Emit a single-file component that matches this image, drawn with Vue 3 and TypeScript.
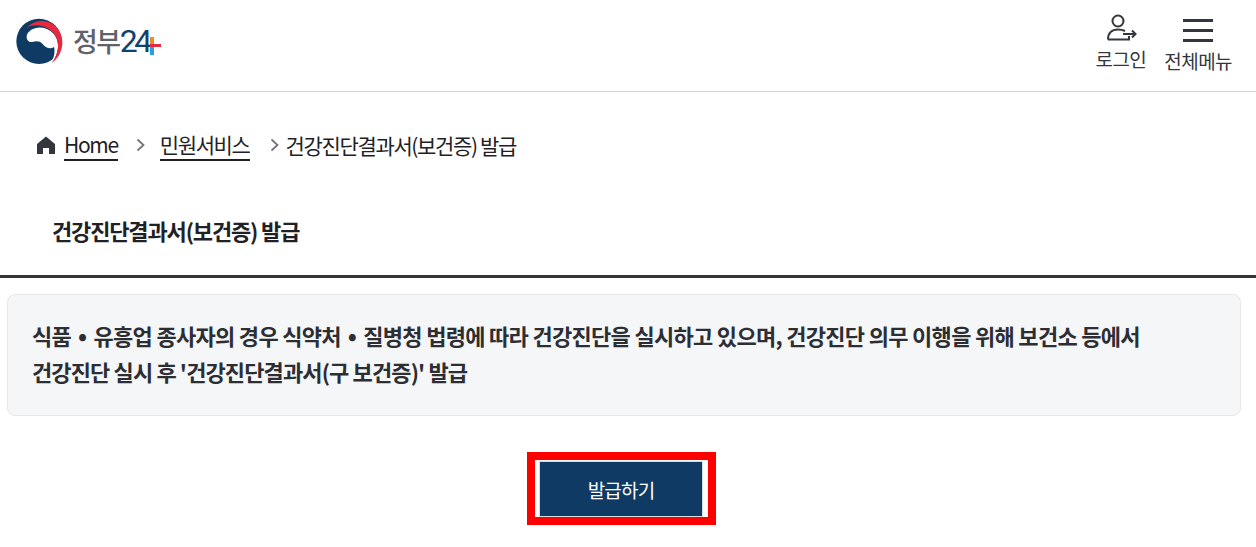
<script setup lang="ts">
const notice = {
  first: ['식품', '유흥업 종사자의 경우 식약처', '질병청 법령에 따라 건강진단을 실시하고 있으며, 건강진단 의무 이행을 위해 보건소 등에서'],
  second: "건강진단 실시 후 '건강진단결과서(구 보건증)' 발급",
}
</script>

<template>
  <div class="page">
    <header class="top">
      <a class="logo">
        <svg class="mark" width="60" height="56" viewBox="0 0 180 168">
          <circle cx="87" cy="85" r="68" fill="#0f3a64" />
          <path d="M50 70C52 52 80 38 105 46C130 54 144 75 144 98C144 118 136 136 125 150C132 132 136 116 132 102C120 110 106 104 98 93C88 81 76 85 66 87C56 89 49 80 50 70Z" fill="#fff" />
          <path d="M50 44C72 20 115 14 141 44C168 76 160 126 125 150C146 122 152 88 132 62C112 38 76 30 50 44Z" fill="#e6293e" />
        </svg>
        <span class="word">정부</span>
        <span class="num">24<svg class="plus" width="11" height="18" viewBox="0 0 11 18">
            <rect x="0" y="0" width="4" height="7" fill="#f28a21" />
            <rect x="0" y="10" width="4" height="8" fill="#2a9fd8" />
            <rect x="0" y="7" width="11" height="3" fill="#e6293e" />
          </svg></span>
      </a>
      <nav class="tools">
        <a class="tool login">
          <svg width="32" height="30" viewBox="0 0 32 30" fill="none" stroke="#33363d" stroke-width="2">
            <circle cx="13" cy="8" r="5.500" />
            <path d="M3 26.500C3 20 7 16.500 13 16.500C16 16.500 18 17 20 18M3 26.500H24V23" />
            <path d="M18 21H30.500M27 17.500L30.500 21L27 24.500" />
          </svg>
          <span>로그인</span>
        </a>
        <a class="tool menu">
          <span class="bars"><i></i><i></i><i></i></span>
          <span>전체메뉴</span>
        </a>
      </nav>
    </header>

    <div class="crumbs">
      <svg width="18" height="18" viewBox="0 0 18 18"><path d="M9 0.500L18 8V18H12V12H6V18H0V8Z" fill="#33363d" /></svg>
      <a class="link">Home</a>
      <svg class="chev" width="9" height="14" viewBox="0 0 9 14" fill="none" stroke="#77727a" stroke-width="1.800"><path d="M1.500 1.500L7.500 7L1.500 12.500" /></svg>
      <a class="link">민원서비스</a>
      <svg class="chev second" width="9" height="14" viewBox="0 0 9 14" fill="none" stroke="#77727a" stroke-width="1.800"><path d="M1.500 1.500L7.500 7L1.500 12.500" /></svg>
      <span class="current">건강진단결과서(보건증) 발급</span>
    </div>

    <h1 class="title">건강진단결과서(보건증) 발급</h1>

    <div class="notice">
      <p class="lead">
        {{ notice.first[0] }}<span class="dot">•</span>{{ notice.first[1] }}<span class="dot">•</span>{{ notice.first[2] }}
      </p>
      <p>{{ notice.second }}</p>
    </div>

    <div class="actions">
      <div class="mark-box">
        <button class="issue" type="button">발급하기</button>
      </div>
    </div>
  </div>
</template>

<style>
html, body {
  background: #fff;
}
</style>

<style scoped>
.page {
  width: 1256px;
  height: 547px;
  overflow: hidden;
  font-family: "Noto Sans CJK KR", "Noto Sans", sans-serif;
  color: #1f2126;
}
.top {
  display: flex;
  justify-content: space-between;
  height: 91px;
  border-bottom: 1px solid #d2d2d2;
}
.logo {
  display: flex;
  align-items: center;
  padding: 0 0 10px 10px;
}
.mark {
  margin-right: 3px;
}
.word {
  font-size: 27px;
  letter-spacing: -1.500px;
  color: #5f6268;
  font-weight: 500;
}
.num {
  display: flex;
  align-items: center;
  font-family: Roboto, sans-serif;
  font-size: 32px;
  font-weight: 400;
  letter-spacing: -3.500px;
  color: #10426f;
}
.plus {
  margin-left: 1px;
  margin-top: 10px;
}
.tools {
  display: flex;
  padding-right: 24px;
  gap: 18px;
}
.tool {
  display: flex;
  flex-direction: column;
  align-items: center;
  font-size: 19px;
  letter-spacing: -0.550px;
  color: #33363d;
}
.login {
  padding-top: 13px;
}
.login span {
  margin-top: 3px;
  line-height: 26px;
}
.menu {
  padding-top: 19px;
}
.menu span:last-child {
  margin-top: 6px;
  line-height: 26px;
}
.bars {
  display: flex;
  flex-direction: column;
  gap: 7px;
}
.bars i {
  display: block;
  width: 30px;
  height: 3px;
  background: #33363d;
}
.crumbs {
  display: flex;
  align-items: center;
  height: 38px;
  margin-top: 34px;
  padding-left: 37px;
  font-size: 21px;
  letter-spacing: -1.350px;
  color: #1f2126;
}
.link {
  margin-left: 9px;
  line-height: 30px;
  border-bottom: 2px solid #1f2126;
}
.chev {
  margin-left: 18px;
  margin-right: 6px;
}
.chev.second {
  margin-left: 20px;
  margin-right: 0;
}
.current {
  margin-left: 7px;
  line-height: 30px;
}
.title {
  margin: 48px 0 0;
  padding-left: 52px;
  height: 63px;
  border-bottom: 3px solid #33363d;
  font-size: 22px;
  line-height: 36px;
  font-weight: 700;
  letter-spacing: -1.150px;
  color: #1f2126;
}
.notice {
  margin: 16px 15px 0 7px;
  height: 122px;
  box-sizing: border-box;
  padding: 22px 24px 0;
  background: #f5f6f8;
  border: 1px solid #e6e8ea;
  border-radius: 8px;
}
.notice p {
  margin: 0;
  font-size: 22px;
  line-height: 36px;
  font-weight: 700;
  letter-spacing: -0.880px;
  color: #2c2e33;
}
.notice .lead {
  letter-spacing: -0.700px;
}
.dot {
  margin: 0 7px;
  font-size: 24px;
  line-height: 1;
}
.actions {
  display: flex;
  justify-content: center;
  margin-top: 36px;
  padding-right: 13px;
}
.mark-box {
  border: 8px solid #ff0000;
  padding: 1px 5px 0 4px;
}
.issue {
  display: block;
  width: 164px;
  height: 56px;
  padding: 0;
  background: #0f3a64;
  border: 1px solid #d8dde2;
  color: #fff;
  font-family: inherit;
  font-size: 19px;
  letter-spacing: -0.800px;
}
</style>
